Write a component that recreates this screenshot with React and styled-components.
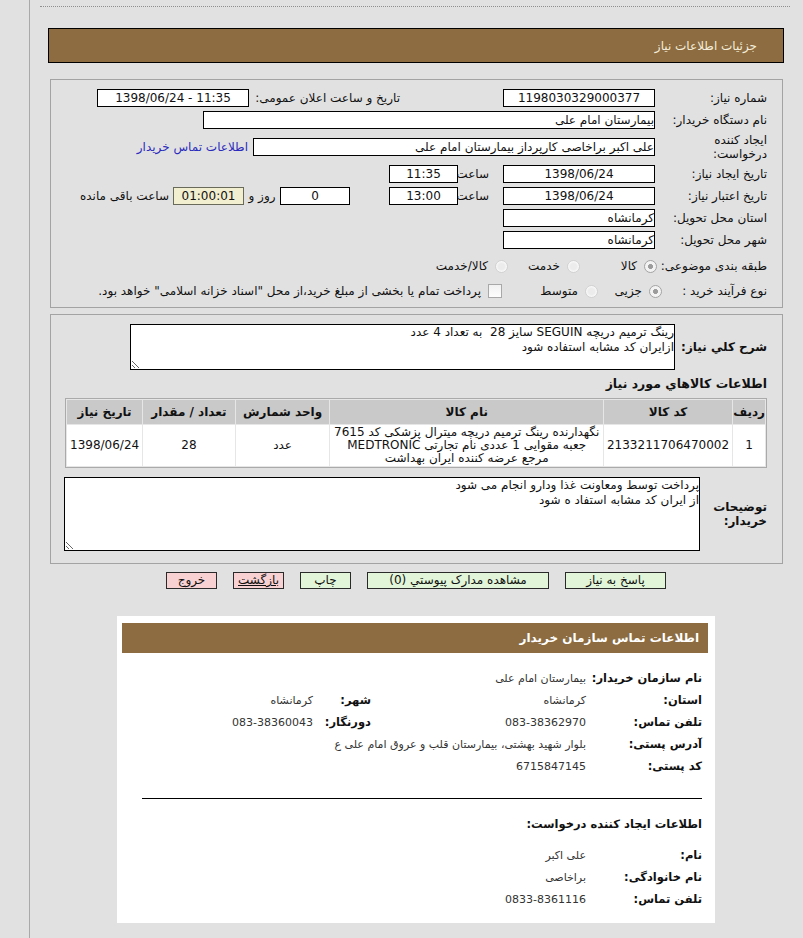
import React from 'react'
import styled, { createGlobalStyle } from 'styled-components'

const GlobalStyle = createGlobalStyle`
  html, body {
    margin: 0;
    padding: 0;
    background: #e1e1e1;
  }
  body {
    font-family: Tahoma, "DejaVu Sans", sans-serif;
    font-size: 12px;
    color: #111;
  }
`

const Page = styled.div`
  padding-left: 29px;
  direction: ltr;
`

const Frame = styled.div`
  min-height: 938px;
  box-sizing: border-box;
  border-left: 1px solid #a9a9a9;
  padding-top: 6px;
`

const DottedRule = styled.div`
  margin: 0 13px 0 10px;
  border-top: 1px dotted #8e8e8e;
`

const Column = styled.div`
  direction: rtl;
  width: 736px;
  margin: 21px 0 0 18px;
`

const TitleBar = styled.div`
  height: 33px;
  border: 1px solid #000;
  background: #8c6c40;
  color: #f4ecda;
  display: flex;
  align-items: center;
  padding-right: 26px;
`

const Panel = styled.div`
  margin: ${p => p.top}px 1px 0 2px;
  border: 1px solid #a3a3a3;
  padding: ${p => p.pt}px 15px ${p => p.pb}px 0;
`

const Row = styled.div`
  display: flex;
  align-items: center;
  height: ${p => p.h || 22}px;
  margin-top: ${p => p.mt || 0}px;
`

const Label = styled.div`
  width: ${p => p.w || 112}px;
  flex: none;
  line-height: 14px;
  white-space: nowrap;
  font-weight: ${p => (p.bold ? 'bold' : 'normal')};
  font-size: 12px;
`

const Box = styled.div`
  flex: none;
  width: ${p => p.w}px;
  height: 16px;
  line-height: 16px;
  border: 1px solid ${p => (p.note ? '#6a6a5a' : '#000')};
  background: ${p => (p.note ? '#f1efcf' : '#fff')};
  text-align: ${p => (p.center ? 'center' : 'right')};
  direction: ${p => (p.ltr ? 'ltr' : 'rtl')};
  margin-right: ${p => p.gap || 0}px;
  white-space: nowrap;
  overflow: hidden;
`

const Caption = styled.div`
  flex: none;
  width: ${p => p.w}px;
  margin-right: ${p => p.gap || 0}px;
  text-align: ${p => (p.center ? 'center' : 'right')};
  padding-right: ${p => p.pr || 0}px;
  box-sizing: border-box;
  white-space: nowrap;
`

const Link = styled.a`
  margin-right: 5px;
  color: #2b2bbd;
  text-decoration: none;
  white-space: nowrap;
`

const Choice = styled.label`
  flex: none;
  width: ${p => (p.w ? `${p.w}px` : 'auto')};
  display: flex;
  align-items: center;
  gap: 7px;
  white-space: nowrap;
`

const Radio = styled.span`
  width: 11px;
  height: 11px;
  border-radius: 50%;
  border: 1px solid ${p => (p.on ? '#a4a4a4' : '#d2d2d2')};
  background: ${p =>
    p.on
      ? 'radial-gradient(circle, #9c9c9c 0 2.2px, #f3f3f3 2.8px)'
      : 'radial-gradient(circle, #ececec 0 3px, #f7f7f7 5px)'};
`

const Check = styled.span`
  width: 12px;
  height: 12px;
  border: 1px solid #a8a8a8;
  background: linear-gradient(#f1f1f1, #fdfdfd);
`

const Area = styled.textarea`
  flex: none;
  width: ${p => p.w}px;
  height: ${p => p.h}px;
  box-sizing: border-box;
  border: 1px solid #000;
  padding: 0;
  margin: 0;
  direction: rtl;
  font-family: Tahoma, "DejaVu Sans", sans-serif;
  font-size: 12px;
  line-height: 15px;
  color: #111;
  background: #fff;
  resize: both;
  outline: none;
`

const SectionHead = styled.div`
  margin-top: 6px;
  height: 16px;
  line-height: 16px;
  font-weight: bold;
  font-size: 12.5px;
`

const ItemsTable = styled.table`
  width: 702px;
  margin: 6px 0 0 auto;
  border: 1px solid #aaaaaa;
  border-spacing: 1px;
  background: #e6e6e6;
`

const Th = styled.th`
  background: #c9c9c9;
  height: 24px;
  padding: 0;
  font-size: 12px;
  font-weight: bold;
  width: ${p => p.w}px;
`

const Td = styled.td`
  background: #fff;
  text-align: center;
  padding: 1px 3px;
  line-height: 13px;
  font-size: 12px;
`

const Buttons = styled.div`
  display: flex;
  justify-content: center;
  gap: 16px;
  margin-top: 8px;
`

const Btn = styled.div`
  width: ${p => p.w}px;
  height: 15px;
  line-height: 15px;
  border: 1px solid #2a2a2a;
  background: ${p => (p.tone === 'red' ? '#f8d2d2' : '#e2f5d8')};
  text-align: center;
  white-space: nowrap;
  text-decoration: ${p => (p.under ? 'underline' : 'none')};
`

const Sheet = styled.div`
  width: 586px;
  margin: 27px auto 0;
  padding: 7px 7px 13px 5px;
  background: #fff;
`

const SheetBar = styled.div`
  height: 30px;
  background: #8c6c40;
  color: #fff;
  font-weight: bold;
  display: flex;
  align-items: center;
  padding-right: 9px;
`

const SheetBody = styled.div`
  padding-right: 6px;
`

const InfoRow = styled.div`
  display: flex;
  align-items: center;
  height: 22px;
  margin-top: ${p => p.mt || 0}px;
`

const InfoLabel = styled.div`
  flex: none;
  width: ${p => p.w || 116}px;
  font-weight: bold;
  font-size: 11.5px;
  white-space: nowrap;
`

const InfoValue = styled.div`
  flex: none;
  width: ${p => (p.w ? `${p.w}px` : 'auto')};
  font-size: 11px;
  color: #333;
  white-space: nowrap;
`

const Divider = styled.div`
  margin: 21px 0 0 20px;
  border-top: 1px solid #000;
`

const SheetHead = styled.div`
  margin-top: 14px;
  height: 22px;
  line-height: 22px;
  font-weight: bold;
  font-size: 11.5px;
`

export default function App() {
  return (
    <Page>
      <GlobalStyle />
      <Frame>
        <DottedRule />
        <Column>
          <TitleBar>جزئیات اطلاعات نیاز</TitleBar>

          <Panel top={16} pt={7} pb={4}>
            <Row>
              <Label>شماره نیاز:</Label>
              <Box w={150} center>1198030329000377</Box>
              <Caption w={151} gap={103}>تاریخ و ساعت اعلان عمومی:</Caption>
              <Box w={150} center ltr>1398/06/24 - 11:35</Box>
            </Row>
            <Row>
              <Label>نام دستگاه خریدار:</Label>
              <Box w={450}>بیمارستان امام علی</Box>
            </Row>
            <Row h={32}>
              <Label>
                ایجاد کننده
                <br />
                درخواست:
              </Label>
              <Box w={400}>علی اکبر براخاصی کارپرداز بیمارستان امام علی</Box>
              <Link href="#">اطلاعات تماس خریدار</Link>
            </Row>
            <Row>
              <Label>تاریخ ایجاد نیاز:</Label>
              <Box w={150} center>1398/06/24</Box>
              <Caption w={45} pr={14}>ساعت</Caption>
              <Box w={67} center>11:35</Box>
            </Row>
            <Row>
              <Label>تاریخ اعتبار نیاز:</Label>
              <Box w={150} center>1398/06/24</Box>
              <Caption w={45} pr={14}>ساعت</Caption>
              <Box w={67} center>13:00</Box>
              <Box w={68} center gap={39}>0</Box>
              <Caption w={36} center>روز و</Caption>
              <Box w={69} center note>01:00:01</Box>
              <Caption w={100} gap={4}>ساعت باقی مانده</Caption>
            </Row>
            <Row>
              <Label>استان محل تحویل:</Label>
              <Box w={150}>کرمانشاه</Box>
            </Row>
            <Row>
              <Label>شهر محل تحویل:</Label>
              <Box w={150}>کرمانشاه</Box>
            </Row>
            <Row h={26} mt={2}>
              <Label w={110}>طبقه بندی موضوعی:</Label>
              <Choice w={77}><Radio on />کالا</Choice>
              <Choice w={72}><Radio />خدمت</Choice>
              <Choice><Radio />کالا/خدمت</Choice>
            </Row>
            <Row h={24}>
              <Label w={105}>نوع فرآیند خرید :</Label>
              <Choice w={64}><Radio on />جزیی</Choice>
              <Choice w={96}><Radio />متوسط</Choice>
              <Choice>
                <Check />
                پرداخت تمام یا بخشی از مبلغ خرید،از محل "اسناد خزانه اسلامی" خواهد بود.
              </Choice>
            </Row>
          </Panel>

          <Panel top={6} pt={9} pb={12}>
            <Row h={46}>
              <Label w={92} bold>شرح کلي نياز:</Label>
              <Area
                w={545}
                h={46}
                readOnly
                value={'رینگ ترمیم دریچه SEGUIN سایز 28  به تعداد 4 عدد\nازایران کد مشابه استفاده شود'}
              />
            </Row>
            <SectionHead>اطلاعات كالاهاي مورد نياز</SectionHead>
            <ItemsTable>
              <thead>
                <tr>
                  <Th w={27}>ردیف</Th>
                  <Th w={101}>کد کالا</Th>
                  <Th w={274}>نام کالا</Th>
                  <Th w={94}>واحد شمارش</Th>
                  <Th w={92}>تعداد / مقدار</Th>
                  <Th>تاریخ نیاز</Th>
                </tr>
              </thead>
              <tbody>
                <tr>
                  <Td>1</Td>
                  <Td>2133211706470002</Td>
                  <Td>
                    نگهدارنده رینگ ترمیم دریچه میترال پزشکی کد 7615 جعبه مقوایی 1 عددی نام تجارتی
                    MEDTRONIC مرجع عرضه کننده ایران بهداشت
                  </Td>
                  <Td>عدد</Td>
                  <Td>28</Td>
                  <Td>1398/06/24</Td>
                </tr>
              </tbody>
            </ItemsTable>
            <Row h={74} mt={9}>
              <Label w={67} bold>
                توضیحات
                <br />
                خریدار:
              </Label>
              <Area
                w={636}
                h={74}
                readOnly
                value={'پرداخت توسط ومعاونت غذا ودارو انجام می شود\nاز ایران کد مشابه استفاد ه شود'}
              />
            </Row>
          </Panel>

          <Buttons>
            <Btn w={99}>پاسخ به نیاز</Btn>
            <Btn w={180}>مشاهده مدارک پیوستي (0)</Btn>
            <Btn w={49}>چاپ</Btn>
            <Btn w={49} tone="red" under>بازگشت</Btn>
            <Btn w={49} tone="red">خروج</Btn>
          </Buttons>

          <Sheet>
            <SheetBar>اطلاعات تماس سازمان خریدار</SheetBar>
            <SheetBody>
              <InfoRow mt={14}>
                <InfoLabel>نام سازمان خریدار:</InfoLabel>
                <InfoValue>بیمارستان امام علی</InfoValue>
              </InfoRow>
              <InfoRow>
                <InfoLabel>استان:</InfoLabel>
                <InfoValue w={215}>کرمانشاه</InfoValue>
                <InfoLabel w={58}>شهر:</InfoLabel>
                <InfoValue>کرمانشاه</InfoValue>
              </InfoRow>
              <InfoRow>
                <InfoLabel>تلفن تماس:</InfoLabel>
                <InfoValue w={215}>083-38362970</InfoValue>
                <InfoLabel w={58}>دورنگار:</InfoLabel>
                <InfoValue>083-38360043</InfoValue>
              </InfoRow>
              <InfoRow>
                <InfoLabel>آدرس پستی:</InfoLabel>
                <InfoValue>بلوار شهید بهشتی، بیمارستان قلب و عروق امام علی ع</InfoValue>
              </InfoRow>
              <InfoRow>
                <InfoLabel>کد پستی:</InfoLabel>
                <InfoValue>6715847145</InfoValue>
              </InfoRow>
              <Divider />
              <SheetHead>اطلاعات ایجاد کننده درخواست:</SheetHead>
              <InfoRow mt={9}>
                <InfoLabel>نام:</InfoLabel>
                <InfoValue>علی اکبر</InfoValue>
              </InfoRow>
              <InfoRow>
                <InfoLabel>نام خانوادگی:</InfoLabel>
                <InfoValue>براخاصی</InfoValue>
              </InfoRow>
              <InfoRow>
                <InfoLabel>تلفن تماس:</InfoLabel>
                <InfoValue>0833-8361116</InfoValue>
              </InfoRow>
            </SheetBody>
          </Sheet>
        </Column>
      </Frame>
    </Page>
  )
}
